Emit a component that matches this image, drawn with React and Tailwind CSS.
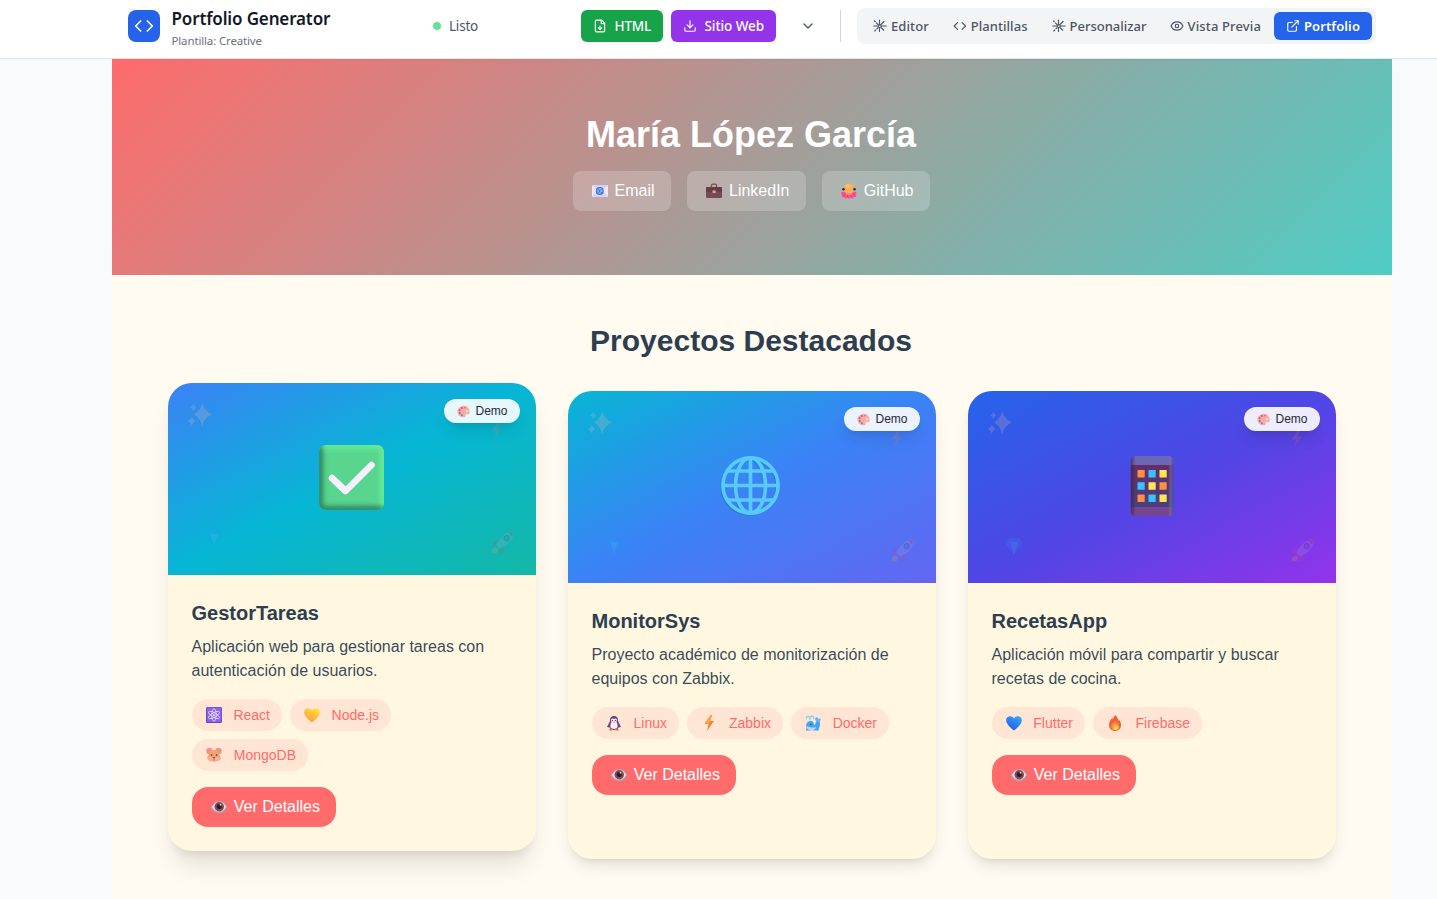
import React from "react";
import { Code, FileDown, Download, ChevronDown, Eye, ExternalLink } from "lucide-react";

const Svg = ({ className = "w-4 h-4", children, box = "0 0 32 32" }) => (
  <svg viewBox={box} className={"shrink-0 " + className} fill="none" aria-hidden="true">{children}</svg>
);

const Burst = () => (
  <Svg box="0 0 28 28" className="w-3.5 h-3.5">
    <g stroke="currentColor" strokeWidth="2.2" strokeLinecap="round">
      <path d="M13 2v10M13 18v7M1.500 14H10M16 14h10.500M3 4l1.500 1.500M7 8l3 3M22 5l-6 6M3.500 24l2-2M8 19.500l2-2M21.500 22.500l-5-5" />
      <circle cx="13.500" cy="14" r="3" />
    </g>
  </Svg>
);

const Mail = () => (
  <Svg>
    <rect x="0" y="4" width="32" height="24" rx="1" fill="#dccff2" />
    <path d="M0 5l12 10L0 27zM32 5L20 15l12 12z" fill="#eee6f9" />
    <circle cx="15.500" cy="16" r="8" fill="#2f73d8" />
    <circle cx="15.500" cy="16" r="3" stroke="#a9ccff" strokeWidth="1.600" />
    <path d="M18.500 13v4.500c1 2 3 0 2.500-2.500a5.500 5.500 0 1 0-3 6" stroke="#a9ccff" strokeWidth="1.200" />
  </Svg>
);
const Briefcase = () => (
  <Svg>
    <path d="M11 9V4.500c0-1.500 1-2.500 2.500-2.500h5C20 2 21 3 21 4.500V9" stroke="#7b4a50" strokeWidth="2.500" />
    <rect x="0" y="8" width="32" height="22" rx="2.500" fill="#74495a" />
    <path d="M0 10.500Q0 8 2.500 8h27Q32 8 32 10.500V18H0z" fill="#663e4a" />
    <rect x="13" y="15" width="6.500" height="5" rx="1" fill="#f2a36a" />
  </Svg>
);
const Octopus = () => (
  <Svg>
    <path d="M5 18c-5-2-6 4-3 6-2 3 1 6 4 4 1 4 5 4 7 1 2 4 5 3 6 0 3 3 6 2 7-1 4 1 6-2 3-5 3-3 2-7-2-5z" fill="#ff4f91" />
    <path d="M6 25l3-4M13 28l1-6M21 27l-2-5M27 24l-4-3" stroke="#d92a78" strokeWidth="1.500" />
    <circle cx="16" cy="11" r="10.500" fill="#f9ad55" />
    <circle cx="14" cy="7" r="5" fill="#ffc06b" opacity=".8" />
    <path d="M9 19q7 4 14 0v4q-7 3-14 0z" fill="#fb8b6d" />
    <circle cx="5" cy="12.500" r="2.600" fill="#3c2846" /><circle cx="27" cy="12.500" r="2.600" fill="#3c2846" />
  </Svg>
);
const EyeEmoji = () => (
  <Svg>
    <path d="M0 17C5 7 10 4 17 4c7 0 12 5 15 12-4 8-9 12-16 12C9 28 4 24 0 17z" fill="#b8a6ba" />
    <path d="M2 16C7 8 11 6 17 6c6 0 10 4 13 10-4 7-8 9-14 9-6 0-10-3-14-9z" fill="#e8deee" />
    <circle cx="16.500" cy="15.500" r="9.500" fill="#7d4b50" />
    <circle cx="16.500" cy="15" r="5" fill="#2e1a25" />
    <circle cx="19" cy="11.500" r="1.800" fill="#e9cbd4" />
  </Svg>
);
const Palette = () => (
  <Svg className="w-[13px] h-[13px]">
    <path d="M17 2C8 2 1 8 1 16c0 8 6 14 14 14 5 0 7-2 6-5 0-3 2-3 5-2 3 0 5-3 5-7C31 8 25 2 17 2z" fill="#ffaa9f" />
    <circle cx="24" cy="15" r="3" fill="#ffe4df" />
    <circle cx="12" cy="7.500" r="2.500" fill="#b14fdc" /><circle cx="6.500" cy="12.500" r="2.600" fill="#ef4a8f" />
    <circle cx="7" cy="19.500" r="2.500" fill="#3c93a9" /><circle cx="12" cy="25" r="2.500" fill="#5b84dd" />
    <circle cx="19" cy="6.500" r="2" fill="#f0609c" />
  </Svg>
);
const Atom = () => (
  <Svg>
    <rect width="32" height="32" rx="3" fill="#6440c8" />
    <rect x="2" y="1" width="29" height="29" rx="2" fill="#8b62e8" />
    <g stroke="#eadfff" strokeWidth="1.600">
      <ellipse cx="16" cy="16" rx="4.500" ry="12.500" />
      <ellipse cx="16" cy="16" rx="4.500" ry="12.500" transform="rotate(60 16 16)" />
      <ellipse cx="16" cy="16" rx="4.500" ry="12.500" transform="rotate(120 16 16)" />
    </g>
    <circle cx="16" cy="16" r="2" fill="#fff" />
  </Svg>
);
const Heart = ({ id, a, b }) => (
  <Svg>
    <defs><linearGradient id={id} x1="0.200" y1="1" x2="0.800" y2="0"><stop stopColor={a} /><stop offset="1" stopColor={b} /></linearGradient></defs>
    <path d="M16 7C13 1 5 1 1.500 6-2 12 2 20 16 31 30 20 34 12 30.500 6 27 1 19 1 16 7z" fill={`url(#${id})`} />
  </Svg>
);
const Mouse = () => (
  <Svg>
    <circle cx="7" cy="8" r="6.500" fill="#ef9b80" /><circle cx="25" cy="8" r="6.500" fill="#ef9b80" />
    <circle cx="6.500" cy="8" r="4" fill="#ff8498" /><circle cx="25.500" cy="8" r="4" fill="#ff8498" />
    <path d="M9 8q7-4 14 0l7 14q-2 7-14 7T2 22z" fill="#f2a66f" />
    <path d="M3 21q5-1 10 0l3-2 3 2q5-1 10 0-2 8-13 8T3 21z" fill="#efb596" />
    <circle cx="11" cy="16" r="1.600" fill="#452334" /><circle cx="21" cy="16" r="1.600" fill="#452334" />
    <path d="M13 20h6l-3 3.500z" fill="#ef147e" /><path d="M16 23v4" stroke="#b83357" strokeWidth="1.500" />
  </Svg>
);
const Penguin = () => (
  <Svg>
    <path d="M16 2c-7 0-8 5-8 10L2 24l5 1 3 5h12l3-5 5-1-6-12c0-5-1-10-8-10z" fill="#66497e" />
    <path d="M16 8c-5-3-7 1-5 6-4 8-3 14 5 14s9-6 5-14c2-5 0-9-5-6z" fill="#f3eef9" />
    <circle cx="13" cy="11" r="1.200" fill="#3b214c" /><circle cx="19" cy="11" r="1.200" fill="#3b214c" />
    <path d="M13 13h6l-3 4z" fill="#f69a51" />
    <path d="M7 28q4-3 8 1l-3 2H7zM25 28q-4-3-8 1l3 2h5z" fill="#e0703f" />
  </Svg>
);
const Bolt = ({ className }) => (
  <Svg className={className}>
    <path d="M19 0L7 18h8l-3 14 14-20h-8l4-12z" fill="#f58238" /><path d="M19 0L8 17h9l5-17z" fill="#ffa04a" />
  </Svg>
);
const Whale = () => (
  <Svg>
    <path d="M14 12C5 11 1 17 3 25l-1 6h9l2-2 4 2h11l-1-3c4-5 3-11 2-17l-7 2c-1 5-2 7-4 7-1-4-2-7-4-8z" fill="#3da5f5" />
    <path d="M3 22c8 3 12 4 19 2 0 4-4 7-10 7-5 0-9-4-9-9z" fill="#c9d0ff" />
    <path d="M22 12q-4-5 1-8 4 1 4 5 1-3 4-2 1 5-4 7z" fill="#57baff" />
    <path d="M10 10V5M10 5Q7 1 3 4M10 5q4-5 7-1M3 4v3M17 4v3" stroke="#72cff5" strokeWidth="2.200" strokeLinecap="round" />
    <circle cx="12" cy="19" r="1.300" fill="#22446f" />
  </Svg>
);
const Fire = () => (
  <Svg>
    <path d="M17 0c-4 3-5 7-5 9-2-1-1-3-1-4-5 5-7 10-7 15 0 7 5 12 12 12s12-5 12-12c0-5-2-8-4-11l-1 3C22 6 19 3 17 0z" fill="#ed603b" />
    <path d="M17 11c-6 5-9 8-9 12 0 5 4 8 8 8s8-3 8-8c0-4-3-5-3-9-2 1-3 3-4 5z" fill="#ff8c38" />
    <path d="M18 17c-5 5-8 13-2 13s9-4 6-9l-3 3z" fill="#ffd052" />
  </Svg>
);
const Check = () => (
  <Svg box="0 0 65 65" className="w-[65px] h-[65px] -translate-x-px -translate-y-[2px]">
    <defs>
      <filter id="soft" x="-20%" y="-20%" width="140%" height="140%"><feGaussianBlur stdDeviation="2.400" /></filter>
      <clipPath id="tile"><rect width="65" height="65" rx="7" /></clipPath>
    </defs>
    <g clipPath="url(#tile)">
      <rect width="65" height="65" fill="#58d58e" />
      <g filter="url(#soft)" fill="none" strokeWidth="6">
        <path d="M1 1h63v64" stroke="#65ee96" /><path d="M1 0v64h64" stroke="#2f7f5f" />
      </g>
    </g>
    <path d="M13 33l13.500 13L52.500 20" stroke="#f8eefe" strokeWidth="6.600" strokeLinecap="round" strokeLinejoin="round" />
  </Svg>
);
const Globe = () => (
  <Svg box="0 0 60 60" className="w-[60px] h-[60px] -translate-x-[1.5px] -translate-y-[1.5px]">
    <g stroke="#287bbf" strokeWidth="3.400" transform="translate(-.9 .9)"><circle cx="30" cy="30" r="27.600" /><ellipse cx="30" cy="30" rx="15" ry="27" opacity=".5" /></g>
    <g stroke="#58cafd" strokeWidth="3.700">
      <circle cx="30" cy="30" r="27.600" /><ellipse cx="30" cy="30" rx="15" ry="27.500" />
      <path d="M30 2v56M2 30h56M7 15.500h46M7 44.500h46" />
    </g>
  </Svg>
);
const Phone = () => {
  const colors = ["#ff9142", "#37c3ff", "#ffe753", "#37c3ff", "#ffe753", "#ff9142", "#ff9142", "#37c3ff", "#ffe753"];
  return (
    <Svg box="0 0 43 60" className="w-[43px] h-[60px] -translate-x-[0.5px] -translate-y-px">
      <defs>
        <linearGradient id="screen" x2="0" y2="1"><stop stopColor="#632e65" /><stop offset="1" stopColor="#493f80" /></linearGradient>
        <linearGradient id="edge"><stop stopColor="#3d2853" stopOpacity=".8" /><stop offset=".12" stopColor="#3d2853" stopOpacity="0" /><stop offset=".87" stopColor="#7470b0" stopOpacity="0" /><stop offset=".93" stopColor="#7470b0" stopOpacity=".5" /><stop offset="1" stopColor="#44478b" /></linearGradient>
      </defs>
      <rect width="43" height="60" rx="5" fill="#6c66b6" />
      <path d="M0 50h43v5q0 5-5 5H5q-5 0-5-5z" fill="#76458f" />
      <rect y="9" width="43" height="42" fill="url(#screen)" />
      <rect width="43" height="60" rx="5" fill="url(#edge)" />
      {colors.map((c, i) => <rect key={i} x={7 + (i % 3) * 11} y={14 + Math.floor(i / 3) * 12.2} width="7.200" height="7.600" rx=".6" fill={c} />)}
    </Svg>
  );
};

const Sparkles = () => (
  <Svg className="w-6 h-6">
    <path d="M19 0q3 11 13 15-10 4-13 16-3-12-11-16 8-4 11-15zM7 1q1 3 4 5-3 1-4 5-1-4-4-5 3-2 4-5zM5 18q1 4 5 6-4 2-5 6-1-4-5-6 4-2 5-6z" fill="#ffc49b" />
  </Svg>
);
const Gem = () => (
  <Svg className="w-[18px] h-[18px]"><path d="M7 2h18l7 8-16 21L0 10z" fill="#1aa0ee" /><path d="M10 9h13l-7 21z" fill="#58c4f4" /></Svg>
);
const Rocket = () => (
  <Svg className="w-6 h-6">
    <path d="M9 14l-6 1-2 7 8-2zM18 23l-1 7-7 1 2-9z" fill="#d83c70" />
    <path d="M31 1C21 2 13 8 7 20l5 5C24 20 30 12 31 1z" fill="#b8a6c9" /><path d="M31 1l-8 3 5 5z" fill="#d83c70" />
    <circle cx="21" cy="11" r="3.500" fill="#4d75bd" stroke="#654b86" strokeWidth="1.500" />
    <path d="M7 23l3 3-3 5H1v-5z" fill="#f6a83b" />
  </Svg>
);

const projects = [
  {
    name: "GestorTareas", text: "Aplicación web para gestionar tareas con autenticación de usuarios.", art: <Check />,
    card: "-translate-y-2 shadow-[0_20px_25px_-5px_rgba(0,0,0,0.1),0_8px_10px_-6px_rgba(0,0,0,0.1)]",
    bg: "bg-[linear-gradient(to_bottom_right,#3b82f6,#06b6d4,#14b8a6)]",
    tags: [["React", <Atom />, "w-[90px]"], ["Node.js", <Heart id="gold" a="#ff9640" b="#ffe33d" />, "w-[101px]"], ["MongoDB", <Mouse />, "w-[116px]"]],
  },
  {
    name: "MonitorSys", text: "Proyecto académico de monitorización de equipos con Zabbix.", art: <Globe />,
    card: "shadow-[0_10px_15px_-3px_rgba(0,0,0,0.1),0_4px_6px_-4px_rgba(0,0,0,0.1)]",
    bg: "bg-[linear-gradient(to_bottom_right,#06b6d4,#3b82f6,#6366f1)]",
    tags: [["Linux", <Penguin />, "w-[87px]"], ["Zabbix", <Bolt />, "w-24"], ["Docker", <Whale />, "w-[98px]"]],
  },
  {
    name: "RecetasApp", text: "Aplicación móvil para compartir y buscar recetas de cocina.", art: <Phone />,
    card: "shadow-[0_10px_15px_-3px_rgba(0,0,0,0.1),0_4px_6px_-4px_rgba(0,0,0,0.1)]",
    bg: "bg-[linear-gradient(to_bottom_right,#2563eb,#4f46e5,#9333ea)]",
    tags: [["Flutter", <Heart id="blue" a="#2356ec" b="#35a7ff" />, "w-[93px]"], ["Firebase", <Fire />, "w-[109px]"]],
  },
];

const Card = ({ p }) => (
  <article className={"h-[468px] overflow-hidden rounded-3xl bg-[#fff7e0] " + p.card}>
    <div className={"relative flex h-48 items-center justify-center " + p.bg}>
      <div className="absolute left-5 top-5 opacity-20"><Sparkles /></div>
      <div className="absolute right-[31px] top-[39px] opacity-15"><Bolt className="h-[17px] w-[17px]" /></div>
      <div className="absolute bottom-[28px] left-[37px] opacity-20"><Gem /></div>
      <div className="absolute bottom-[21px] right-[21px] opacity-20"><Rocket /></div>
      {p.art}
      <div className="absolute right-4 top-4 flex h-6 w-[76px] items-center gap-1.5 rounded-full bg-white/90 pl-[13px] text-xs text-[#1f2937] shadow-lg">
        <Palette /><span className="-ml-[0.5px]">Demo</span>
      </div>
    </div>
    <div className="p-6">
      <h3 className="mb-2 -ml-[0.5px] text-xl font-bold text-[#2c3e50]">{p.name}</h3>
      <p className="mb-4 -ml-[0.5px] text-base text-[#2c3e50]/95">{p.text}</p>
      <div className="mb-4 flex flex-wrap gap-2">
        {p.tags.map(([name, icon, w]) => (
          <span key={name} className={"flex h-8 items-center justify-between rounded-full bg-[#ffe5d4] pl-3.5 pr-3 text-sm text-[#ff6b6b] " + w}>
            {icon}{name}
          </span>
        ))}
      </div>
      <button className="flex h-10 w-36 items-center justify-between whitespace-nowrap rounded-2xl bg-[#ff6b6b] pl-[19px] pr-4 text-base text-white">
        <EyeEmoji />Ver Detalles
      </button>
    </div>
  </article>
);

const nav = [
  ["Editor", <Burst />, "w-20 tracking-[0.1px]"],
  ["Plantillas", <Code size={14} />, "w-[98.5px] tracking-[0.05px]"],
  ["Personalizar", <Burst />, "w-[118px]"],
  ["Vista Previa", <Eye size={14} />, "w-[116.5px] tracking-[0.15px]"],
];

export default function App() {
  return (
    <div className="h-[899px] overflow-hidden bg-[#f9fafb] font-['Liberation_Sans',Arial,sans-serif]">
      <header className="relative z-10 flex h-[59px] items-start border-b border-[#e5e7eb] bg-white pl-32 font-['Noto_Sans',sans-serif] shadow-[0_1px_2px_rgba(0,0,0,0.04)]">
        <div className="mt-2.5 flex h-8 w-8 items-center justify-center rounded-lg bg-[#2563eb] text-white"><Code size={20} /></div>
        <div className="ml-[11.5px] mt-2 w-[261.5px] whitespace-nowrap">
          <h1 className="text-[17px] font-semibold leading-[22px] tracking-[-0.14px] text-[#111827]">Portfolio Generator</h1>
          <p className="mt-0.5 text-[11.5px] leading-[18px] tracking-[-0.15px] text-[#6b7280]">Plantilla: Creative</p>
        </div>
        <div className="mt-4 flex h-5 w-[148px] items-center gap-2 text-[13.5px] tracking-[-0.2px] text-[#4b5563]">
          <span className="h-2 w-2 rounded-full bg-[#62e394]" />Listo
        </div>
        <button className="mt-2.5 flex h-8 w-[82px] items-center justify-between whitespace-nowrap rounded-md bg-[#16a34a] px-3 text-[13.5px] font-medium tracking-[-0.2px] text-white">
          <FileDown size={14} />HTML
        </button>
        <button className="ml-2 mt-2.5 flex h-8 w-[105px] items-center justify-between whitespace-nowrap rounded-md bg-[#9333ea] px-3 text-[13.5px] font-medium tracking-[-0.08px] text-white">
          <Download size={14} />Sitio Web
        </button>
        <button className="ml-6 mt-[18px] text-[#4b5563]"><ChevronDown size={16} /></button>
        <div className="ml-6 mt-2.5 h-8 w-px bg-[#d1d5db]" />
        <nav className="ml-4 mt-2 flex h-9 w-[519px] rounded-lg bg-[#f3f4f6] p-1 text-[13px] font-medium text-[#4b5563]">
          {nav.map(([name, icon, w]) => (
            <button key={name} className={"flex h-7 shrink-0 items-center gap-1 whitespace-nowrap px-3 " + w}>{icon}<span className="pt-px">{name}</span></button>
          ))}
          <button className="flex h-7 w-[98px] shrink-0 items-center gap-1 whitespace-nowrap rounded-md bg-[#2563eb] px-3 font-semibold tracking-[0.1px] text-white">
            <ExternalLink size={14} /><span className="pt-px">Portfolio</span>
          </button>
        </nav>
      </header>
      <main className="-mt-2 ml-28 w-[1280px] bg-[#fffbf0]">
        <section className="flex h-56 flex-col items-center bg-[linear-gradient(135deg,#ff6b6b,#4ecdc4)] pr-0.5 pt-16 text-white">
          <h2 className="mb-4 text-4xl font-bold">María López García</h2>
          <div className="flex gap-4">
            <a className="flex h-10 w-[98px] items-center justify-between rounded-lg bg-white/20 pl-[19px] pr-4"><Mail />Email</a>
            <a className="flex h-10 w-[119px] items-center justify-between rounded-lg bg-white/20 pl-[19px] pr-4"><Briefcase />LinkedIn</a>
            <a className="flex h-10 w-[108px] items-center justify-between rounded-lg bg-white/20 pl-[19px] pr-4"><Octopus />GitHub</a>
          </div>
        </section>
        <section className="h-[632px] px-14 pt-12">
          <h2 className="mb-8 pr-0.5 text-center text-3xl font-bold text-[#2c3e50]">Proyectos Destacados</h2>
          <div className="grid grid-cols-3 gap-8">
            {projects.map((p) => <Card key={p.name} p={p} />)}
          </div>
        </section>
      </main>
    </div>
  );
}
